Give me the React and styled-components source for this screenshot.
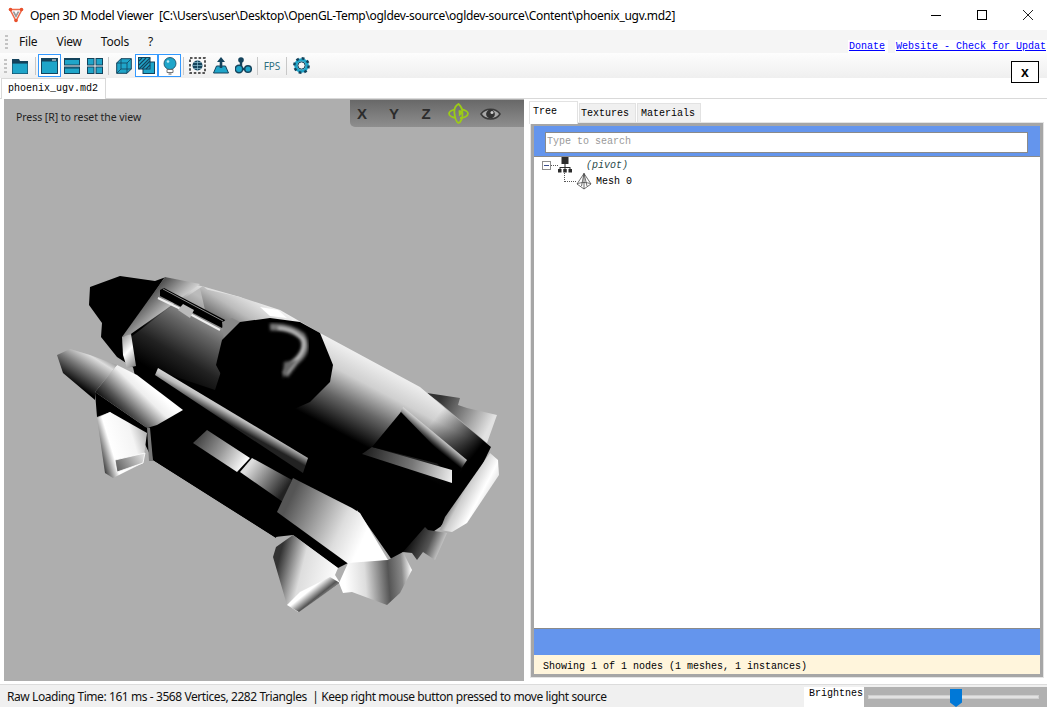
import React from "react";
import styled, { createGlobalStyle } from "styled-components";

const GlobalStyle = createGlobalStyle`
  html, body { margin: 0; padding: 0; background: #fff; overflow: hidden; }
  * { box-sizing: border-box; }
`;

const Window = styled.div`
  position: relative;
  width: 1047px;
  height: 707px;
  display: flex;
  flex-direction: column;
  overflow: hidden;
  background: #fff;
  font-family: "Noto Sans", "Open Sans", sans-serif;
  color: #000;
`;

const TitleBar = styled.div`
  height: 30px;
  display: flex;
  align-items: center;
  padding-left: 8px;
  font-size: 12px;
`;

const TitleText = styled.span`
  margin-left: 6px;
  flex: 1;
  white-space: pre;
  letter-spacing: -0.3px;
`;

const WindowButton = styled.div`
  width: 46px;
  height: 30px;
  display: flex;
  align-items: center;
  justify-content: center;
  margin-right: ${(p) => p.$gap || 0}px;
`;

const MenuBar = styled.div`
  height: 23px;
  display: flex;
  align-items: center;
  background: #f5f5f5;
  padding-left: 5px;
`;

const Grip = styled.div`
  width: 3px;
  height: 14px;
  margin-right: ${(p) => p.$gap}px;
  background: repeating-linear-gradient(to bottom, #c4c4c4 0 2px, transparent 2px 4px);
`;

const MenuItem = styled.span`
  font-size: 12px;
  letter-spacing: -0.2px;
  margin-right: ${(p) => p.$gap}px;
  color: #111;
`;

const Links = styled.div`
  margin-left: auto;
  margin-right: -2px;
  display: flex;
  gap: 7px;
  padding-top: 10px;
`;

const DocLink = styled.a`
  display: block;
  background: #fff;
  padding: 0 3px 0 1px;
  height: 14px;
  font: 10px/14px "Liberation Mono", monospace;
  color: #0000ff;
  text-decoration: underline;
  white-space: nowrap;
`;

const ToolBar = styled.div`
  height: 25px;
  display: flex;
  align-items: center;
  padding-left: 4px;
  background: linear-gradient(to bottom, #fdfdfd, #efefef);
`;

const ToolButton = styled.div`
  width: ${(p) => p.$w || 23}px;
  height: 23px;
  margin-left: ${(p) => p.$shift || 0}px;
  display: flex;
  align-items: center;
  justify-content: center;
  border: 1px solid ${(p) => (p.$active ? "#3399ff" : "transparent")};
  background: ${(p) => (p.$active ? "#fff" : "transparent")};
  font-size: 10px;
  color: #2f6f7f;
`;

const ToolSep = styled.div`
  width: 1px;
  height: 18px;
  margin: 0 ${(p) => p.$r || 2}px 0 ${(p) => p.$l || 2}px;
  background: #c8c8c8;
`;

const CloseBox = styled.div`
  position: absolute;
  left: 1011px;
  top: 61px;
  width: 28px;
  height: 22px;
  border: 1px solid #000;
  background: #fff;
  display: flex;
  align-items: center;
  justify-content: center;
  font: bold 14px "Liberation Sans", sans-serif;
`;

const TabStrip = styled.div`
  height: 21px;
  display: flex;
  align-items: flex-end;
  padding-left: 1px;
  border-bottom: 1px solid #d9d9d9;
`;

const DocTab = styled.div`
  width: 105px;
  height: 21px;
  margin-bottom: -1px;
  padding: 3px 0 0 6px;
  background: #fff;
  border: 1px solid #d9d9d9;
  border-bottom: none;
  font: 10px/14px "Liberation Mono", monospace;
`;

const Main = styled.div`
  flex: 1;
  display: flex;
  padding: 0 4px 3px 4px;
  gap: 5px;
`;

const Viewport = styled.div`
  position: relative;
  width: 520px;
  height: 582px;
  background: #aeaeae;
`;

const ViewHint = styled.div`
  position: relative;
  padding: 11px 0 0 12px;
  font-size: 10.5px;
  letter-spacing: -0.06px;
  color: #222;
`;

const ViewOverlay = styled.div`
  position: absolute;
  right: 0;
  top: 1px;
  width: 174px;
  height: 27px;
  display: flex;
  align-items: center;
  gap: 8px;
  border-bottom-left-radius: 5px;
  background: linear-gradient(to bottom, #686868, #8e8e8e);
`;

const AxisLabel = styled.span`
  width: 24px;
  display: flex;
  justify-content: center;
  font: bold 15px "Liberation Sans", sans-serif;
  color: #2c2c2c;
`;

const ModelCanvas = styled.svg`
  position: absolute;
  left: -4px;
  top: -99px;
  pointer-events: none;
`;

const SidePanel = styled.div`
  flex: 1;
  display: flex;
  flex-direction: column;
  margin: 1px 0 4px;
`;

const SideTabs = styled.div`
  height: 23px;
  display: flex;
  align-items: flex-end;
  gap: 1px;
`;

const SideTab = styled.div`
  width: ${(p) => p.$w}px;
  height: ${(p) => (p.$active ? 23 : 20)}px;
  padding: 3px 0 0 ${(p) => p.$pad}px;
  margin-bottom: ${(p) => (p.$active ? -1 : 0)}px;
  background: ${(p) => (p.$active ? "#fff" : "#f0f0f0")};
  border: 1px solid #e2e2e2;
  border-bottom: none;
  font: 10px/14px "Liberation Mono", monospace;
  position: ${(p) => (p.$active ? "relative" : "static")};
`;

const PanelFrame = styled.div`
  flex: 1;
  display: flex;
  flex-direction: column;
  margin-left: 2px;
  border: 3px solid #a6a6a6;
  outline: 1px solid #e4e4e4;
`;

const SearchBand = styled.div`
  height: 31px;
  padding: 6px 12px 0 11px;
  background: #6495ed;
  border-bottom: 1px solid #8a8a8a;
`;

const SearchBox = styled.div`
  height: 21px;
  padding-left: 1px;
  background: #fff;
  border: 1px solid #8a8a8a;
  font: 10px/18px "Liberation Mono", monospace;
  color: #9a9a9a;
`;

const TreeArea = styled.div`
  flex: 1;
  background: #fff;
  padding: 0 0 0 8px;
  border-bottom: 1px solid #8a8a8a;
`;

const TreeRow = styled.div`
  display: flex;
  align-items: center;
  height: ${(p) => p.$h}px;
  padding-left: ${(p) => p.$indent || 0}px;
  font: ${(p) => (p.$italic ? "italic " : "")}10px "Liberation Mono", monospace;
  color: ${(p) => (p.$italic ? "#2a4a4a" : "#000")};
`;

const TreeLabel = styled.span`
  margin-left: ${(p) => p.$gap}px;
`;

const Expander = styled.div`
  width: 9px;
  height: 9px;
  border: 1px solid #8e8e8e;
  display: flex;
  align-items: center;
  justify-content: center;
  &::after {
    content: "";
    width: 5px;
    height: 1px;
    background: #3c4f8f;
  }
`;

const DotLine = styled.div`
  width: ${(p) => p.$w}px;
  border-top: 1px dotted #555;
`;

const Elbow = styled.div`
  width: 12px;
  height: 9px;
  margin-top: -9px;
  border-left: 1px dotted #555;
  border-bottom: 1px dotted #555;
`;

const BlueBand = styled.div`
  height: 26px;
  background: #6495ed;
`;

const NodeCount = styled.div`
  height: 19px;
  padding-left: 9px;
  background: #fff5dc;
  font: 10px/24px "Liberation Mono", monospace;
  white-space: pre;
`;

const StatusBar = styled.div`
  height: 23px;
  display: flex;
  border-top: 1px solid #dcdcdc;
  background: #f0f0f0;
`;

const StatusText = styled.div`
  width: 804px;
  padding: 3px 0 0 7px;
  font-size: 12px;
  letter-spacing: -0.42px;
  line-height: 17px;
  white-space: pre;
  color: #111;
`;

const BrightLabel = styled.div`
  width: 60px;
  margin-top: 2px;
  padding-left: 5px;
  background: #fff;
  font: 10px/13px "Liberation Mono", monospace;
`;

const SliderBox = styled.div`
  position: relative;
  flex: 1;
  margin-top: 2px;
  background: #b1b1b1;
`;

const SliderTrack = styled.div`
  position: absolute;
  left: 4px;
  right: 8px;
  top: 8px;
  height: 4px;
  background: #e2e2e2;
  border: 1px solid #d0d0d0;
`;

const SliderThumb = styled.div`
  position: absolute;
  left: 86px;
  top: 2px;
  width: 12px;
  height: 18px;
  background: #0078d7;
  clip-path: polygon(0 0, 100% 0, 100% 75%, 50% 100%, 0 75%);
`;

const TEAL = "#1fa5c9";
const NAVY = "#14435c";

const Logo = () => (
  <svg width="16" height="16" viewBox="0 0 16 16">
    <path d="M2 2.500 L14 2.500 L8 14 Z" fill="#fff" stroke="#ee6a4a" strokeWidth="1.600" strokeLinejoin="round" />
    <path d="M4.500 4.500 L8 11 L11.500 4.500 L9.500 4.500 L8 7.500 L6.500 4.500 Z" fill="#999" />
    <circle cx="2.500" cy="2.500" r="1.800" fill="#e8502c" />
    <circle cx="13.500" cy="2.500" r="1.800" fill="#e8502c" />
    <circle cx="8" cy="13.500" r="1.800" fill="#e8502c" />
  </svg>
);

const FolderIcon = () => (
  <svg width="16" height="16" viewBox="0 0 16 16">
    <path d="M0 1h7l1 2h8v3H0z" fill={NAVY} />
    <rect y="5" width="16" height="11" fill={TEAL} stroke={NAVY} strokeWidth="1.200" />
  </svg>
);

const WindowIcon = () => (
  <svg width="17" height="16" viewBox="0 0 17 16">
    <rect x=".5" y=".5" width="16" height="15" fill={TEAL} stroke={NAVY} />
    <rect x=".5" y=".5" width="16" height="3" fill={NAVY} />
    <rect x="11" y="1.500" width="4" height="1" fill="#fff" />
  </svg>
);

const SplitIcon = () => (
  <svg width="16" height="16" viewBox="0 0 16 16">
    <rect x=".5" y=".5" width="15" height="6.500" fill={TEAL} stroke={NAVY} />
    <rect x=".5" y="9" width="15" height="6.500" fill={TEAL} stroke={NAVY} />
    <path d="M.5 1.500h15M.5 10h15" stroke={NAVY} strokeWidth="1.200" />
  </svg>
);

const QuadIcon = () => (
  <svg width="16" height="16" viewBox="0 0 16 16">
    <g fill={TEAL} stroke={NAVY}>
      <rect x=".5" y=".5" width="6.500" height="6.500" />
      <rect x="9" y=".5" width="6.500" height="6.500" />
      <rect x=".5" y="9" width="6.500" height="6.500" />
      <rect x="9" y="9" width="6.500" height="6.500" />
    </g>
  </svg>
);

const CubeIcon = () => (
  <svg width="16" height="16" viewBox="0 0 16 16">
    <path d="M.7 5 L5 .7 H15.300 V11 L11 15.300 H.7 Z" fill={TEAL} stroke={NAVY} />
    <path d="M.7 5 H11 V15.300 M11 5 L15.300 .7 M5 .7 V11 H15.300 M5 11 L.7 15.300" fill="none" stroke={NAVY} strokeWidth=".8" />
  </svg>
);

const ShadeIcon = () => (
  <svg width="17" height="17" viewBox="0 0 17 17">
    <rect x="5" y="5" width="11.500" height="11.500" fill={TEAL} stroke={NAVY} />
    <rect x=".5" y=".5" width="11.500" height="11.500" fill={TEAL} stroke={NAVY} />
    <path d="M1 4 L4 1 M1 8 L8 1 M1 12 L12 1 M4 12 L12 4 M8 12 L12 8" stroke={NAVY} strokeWidth="1.100" />
  </svg>
);

const BulbIcon = () => (
  <svg width="14" height="18" viewBox="0 0 14 18">
    <circle cx="7" cy="6.500" r="6" fill={TEAL} stroke={NAVY} strokeWidth=".8" />
    <path d="M4 12.500h6v3H4z" fill="#fff" stroke="#555" strokeWidth=".8" />
    <path d="M5.500 17h3" stroke="#555" />
    <circle cx="5" cy="4.500" r="1.300" fill="#bfe9f5" />
  </svg>
);

const SelectGlobeIcon = () => (
  <svg width="17" height="17" viewBox="0 0 17 17">
    <rect x="1" y="1" width="15" height="15" fill="none" stroke="#222" strokeWidth="1.500" strokeDasharray="2.500 1.800" />
    <circle cx="8.500" cy="8.500" r="5" fill={NAVY} />
    <path d="M3.500 8.500h10M8.500 3.500v10M5 5.500h7M5 11.500h7" stroke="#9fd4e4" strokeWidth=".6" />
  </svg>
);

const ExportIcon = () => (
  <svg width="16" height="17" viewBox="0 0 16 17">
    <path d="M3.500 9 H12.500 L15.500 16 H.5 Z" fill={TEAL} stroke={NAVY} />
    <path d="M8 0 L12 5 H9.300 V11 H6.700 V5 H4 Z" fill={NAVY} />
  </svg>
);

const NodesIcon = () => (
  <svg width="17" height="17" viewBox="0 0 17 17">
    <path d="M6 4 V12 H13" stroke={NAVY} strokeWidth="2.400" fill="none" />
    <circle cx="6" cy="3" r="2.800" fill={NAVY} />
    <circle cx="4" cy="12" r="3.700" fill={TEAL} stroke={NAVY} strokeWidth="1.500" />
    <circle cx="13" cy="12" r="3.300" fill={TEAL} stroke={NAVY} strokeWidth="1.500" />
  </svg>
);

const GearIcon = () => (
  <svg width="17" height="17" viewBox="0 0 17 17">
    <circle cx="8.500" cy="8.500" r="5.600" fill="none" stroke={TEAL} strokeWidth="3.400" />
    <circle cx="8.500" cy="8.500" r="7.200" fill="none" stroke={NAVY} strokeWidth="2.400" strokeDasharray="2.800 2.850" />
    <circle cx="8.500" cy="8.500" r="3.600" fill="none" stroke={NAVY} strokeWidth="1" />
  </svg>
);

const OrbitIcon = () => (
  <svg width="21" height="21" viewBox="0 0 21 21" fill="none" stroke="#9ccc16" strokeWidth="1.800">
    <path d="M10.500 1 C7 3 6 7 6.500 10.500 C7 15 8 19 10.500 20 C13 19 14.500 15 14.500 10.500 C14.500 7 13 3 10.500 1 Z" />
    <path d="M6.500 6.500 C3 7.500 1 9 1 10.500 C1 12.500 4 14.500 8 15 M14 6.500 C17.500 7 20 9 20 10.500 C20 13 16 15 12 15" />
    <path d="M10.500 7.500 C13 6.500 15 8 14.500 10.500 L11 13.500 Z" fill="#9ccc16" stroke="none" />
  </svg>
);

const EyeIcon = () => (
  <svg width="21" height="16" viewBox="0 0 21 16">
    <path d="M1 8 C5 1.500 16 1.500 20 8 C16 14.500 5 14.500 1 8 Z" fill="#a8a8a8" stroke="#3a3a3a" strokeWidth="1.500" />
    <circle cx="10.500" cy="8" r="4.400" fill="#333" />
    <circle cx="12" cy="6.500" r="1.500" fill="#ccc" />
  </svg>
);

const OrgIcon = () => (
  <svg width="14" height="16" viewBox="0 0 14 16" fill="#2c2c2c">
    <rect x="3.500" y="0" width="7" height="7" />
    <path d="M6.500 7h1v3h5v2h-1v-1H7.500v1h-1v-1H2.500v1h-1v-2h5z" />
    <rect x="0" y="12" width="3.500" height="3.500" />
    <rect x="5.250" y="12" width="3.500" height="3.500" />
    <rect x="10.500" y="12" width="3.500" height="3.500" />
  </svg>
);

const MeshIcon = () => (
  <svg width="16" height="17" viewBox="0 0 16 17" fill="none" stroke="#4a4a4a" strokeWidth=".8">
    <path d="M8 .5 L15 11 L8 16 L1 11 Z" />
    <path d="M8 .5 L5.500 13 M8 .5 L11 13 M1 11 C5 9 11 9 15 11 M8 .5 V16" />
  </svg>
);

// the loaded model, drawn as flat faces with gradient shading
const Grad = ({ id, x1, y1, x2, y2, stops }) => (
  <linearGradient id={id} gradientUnits="userSpaceOnUse" x1={x1} y1={y1} x2={x2} y2={y2}>
    {stops.map(([o, c]) => (
      <stop key={o} offset={o} stopColor={c} />
    ))}
  </linearGradient>
);

const Model = () => (
  <ModelCanvas width="528" height="690" viewBox="0 0 528 690">
    <defs>
      <Grad id="hull" x1="330" y1="338" x2="293" y2="408" stops={[[0, "#f0f0f0"], [0.3, "#cfcfcf"], [0.62, "#666"], [1, "#000"]]} />
      <Grad id="hullEnd" x1="440" y1="412" x2="482" y2="445" stops={[[0, "rgba(0,0,0,0)"], [1, "#000"]]} />
      <Grad id="rear" x1="205" y1="300" x2="160" y2="375" stops={[[0, "#bbb"], [0.35, "#666"], [0.7, "#222"], [1, "#000"]]} />
      <Grad id="topDeck" x1="260" y1="290" x2="225" y2="345" stops={[[0, "#fff"], [0.45, "#bbb"], [1, "#222"]]} />
      <Grad id="ridge" x1="150" y1="305" x2="172" y2="325" stops={[[0, "#999"], [0.5, "#fff"], [1, "#888"]]} />
      <Grad id="ridgeTop" x1="160" y1="280" x2="190" y2="310" stops={[[0, "#444"], [0.6, "#bbb"], [1, "#fff"]]} />
      <Grad id="strip" x1="238" y1="405" x2="228" y2="423" stops={[[0, "#fff"], [0.55, "#bbb"], [1, "#222"]]} />
      <Grad id="nose" x1="75" y1="385" x2="97" y2="350" stops={[[0, "#000"], [0.45, "#777"], [0.8, "#ddd"], [1, "#888"]]} />
      <Grad id="boost" x1="118" y1="418" x2="150" y2="385" stops={[[0, "#000"], [0.3, "#555"], [0.75, "#eee"], [1, "#fff"]]} />
      <Grad id="nozzle" x1="96" y1="450" x2="145" y2="435" stops={[[0, "#222"], [0.3, "#fff"], [0.75, "#f4f4f4"], [1, "#bbb"]]} />
      <Grad id="nozzleIn" x1="118" y1="470" x2="143" y2="455" stops={[[0, "#666"], [1, "#dedede"]]} />
      <Grad id="panelA" x1="198" y1="438" x2="245" y2="465" stops={[[0, "#444"], [0.5, "#999"], [1, "#fff"]]} />
      <Grad id="panelB" x1="250" y1="465" x2="285" y2="490" stops={[[0, "#ddd"], [1, "#222"]]} />
      <Grad id="bodyA" x1="290" y1="500" x2="365" y2="535" stops={[[0, "#555"], [0.35, "#999"], [0.7, "#ddd"], [1, "#fff"]]} />
      <Grad id="cap" x1="345" y1="580" x2="412" y2="575" stops={[[0, "#fff"], [0.3, "#ddd"], [0.65, "#555"], [0.85, "#888"], [1, "#fff"]]} />
      <Grad id="lower" x1="280" y1="555" x2="340" y2="570" stops={[[0, "#333"], [0.4, "#ddd"], [1, "#fff"]]} />
      <Grad id="lowerTip" x1="310" y1="590" x2="322" y2="605" stops={[[0, "#fff"], [0.5, "#555"], [1, "#ccc"]]} />
      <Grad id="endBand" x1="452" y1="480" x2="490" y2="500" stops={[[0, "#111"], [0.4, "#ccc"], [0.75, "#fff"], [1, "#ddd"]]} />
      <Grad id="fin" x1="440" y1="400" x2="490" y2="425" stops={[[0, "#333"], [0.6, "#999"], [1, "#e2e2e2"]]} />
      <Grad id="hatchR" x1="436" y1="432" x2="428" y2="442" stops={[[0, "#eee"], [1, "#000"]]} />
      <Grad id="hatchB" x1="365" y1="455" x2="458" y2="480" stops={[[0, "#222"], [0.5, "#777"], [1, "#fff"]]} />
      <Grad id="bits" x1="410" y1="540" x2="445" y2="555" stops={[[0, "#111"], [0.5, "#555"], [1, "#fff"]]} />
      <filter id="soft"><feGaussianBlur stdDeviation="1.600" /></filter>
    </defs>

    <polygon fill="#000" points="90,287 120,276 155,281 166,277 125,338 137,370 117,357 101,337 102,323 89,305" />
    <polygon fill="url(#fin)" points="427,393 460,398 458,405 467,408 497,415 487,443 440,403" />
    <polygon fill="url(#hull)" points="123,338 165,277 205,287 240,297 320,333 420,387 491,447 470,490 440,527 392,560 357,510 275,537 153,460 133,367" />
    <polygon fill="url(#hullEnd)" points="420,387 491,447 470,490 440,527 400,480" />
    <polygon fill="url(#rear)" points="127,340 166,310 203,286 250,330 228,350 215,390 170,375 135,365" />
    <polygon fill="url(#topDeck)" points="200,288 240,297 280,310 320,333 300,340 240,345 205,310" />
    <polygon fill="url(#ridgeTop)" points="165,277 200,284 165,310 128,336 122,337" />
    <polygon fill="url(#ridge)" points="122,337 131,334 136,366 127,368 123,355" />
    <polygon fill="#fff" points="260,307 278,310 287,318 270,316" />

    <polygon fill="#000" points="153,460 147,428 200,430 292,485 280,510 276,538" />
    <polygon fill="#000" points="275,537 293,535 338,568 348,563 357,510 277,512" />
    <polygon fill="#000" points="95,392 147,428 153,461 143,440 110,412 97,417" />
    <polygon fill="url(#panelA)" points="193,443 207,430 250,458 237,472" />
    <polygon fill="url(#panelB)" points="240,472 252,458 292,480 283,502" />
    <polygon fill="url(#strip)" points="158,368 308,458 303,473 155,375" />

    <polygon fill="url(#lower)" points="293,535 338,568 335,575 340,583 298,612 287,605 273,557 276,547" />
    <polygon fill="url(#lowerTip)" points="299,612 287,605 300,592 330,577 340,583" />
    <polygon fill="url(#bodyA)" points="293,478 352,508 360,513 388,560 350,565 277,512" />
    <polygon fill="url(#cap)" points="348,563 388,560 403,552 412,570 400,593 387,605 352,592 343,593 339,583" />
    <polygon fill="url(#bits)" points="403,552 425,527 428,530 447,533 435,560 423,552 417,560 412,553" />
    <polygon fill="url(#endBand)" points="490,453 498,460 499,475 467,523 452,532 440,530 445,517" />

    <polygon fill="url(#nozzle)" points="97,418 110,412 147,433 143,463 113,478 105,473" />
    <polygon fill="url(#nozzleIn)" stroke="#fff" strokeWidth=".8" points="115,460 145,453 143,463 117,472" />
    <polygon fill="#777" points="147,427 150,428 153,461 149,461" />
    <polygon fill="url(#boost)" points="117,365 137,375 183,410 157,425 147,428 95,392" />
    <polygon fill="url(#nose)" points="57,355 70,349 90,355 117,365 95,392 95,400 63,373" />

    <polygon fill="#000" points="160,290 164,288 225,320 222,328 160,296" />
    <path d="M158 298 L189 313 M190 314 L220 330" stroke="#eee" strokeWidth="2" />
    <path d="M163 289 L223 321" stroke="#888" strokeWidth="1" />
    <polygon fill="#bbb" points="183,304 194,310 190,318 178,310" />
    <polygon fill="url(#ridge)" points="222,322 232,318 248,326 232,345 224,340" />

    <polygon fill="#000" points="216,365 222,340 240,322 270,318 300,322 320,333 333,365 330,382 310,402 283,414 260,412 232,395" />
    <path d="M270 327 Q290 326 302 336 Q310 350 295 362 L285 375" fill="none" stroke="#777" strokeWidth="7" filter="url(#soft)" />
    <path d="M278 328 Q292 328 303 339 Q307 350 295 361 L287 372" fill="none" stroke="#ddd" strokeWidth="2" filter="url(#soft)" />
    <polygon fill="#666" filter="url(#soft)" points="283,378 298,360 284,362" />

    <polygon fill="url(#hatchR)" points="403,407 467,460 452,483 400,413" />
    <polygon fill="url(#hatchB)" points="372,447 452,470 452,483 362,454" />
    <polygon fill="#000" points="401,412 455,468 372,447" />
  </ModelCanvas>
);

export default function App() {
  return (
    <Window>
      <GlobalStyle />
      <TitleBar>
        <Logo />
        <TitleText>{"Open 3D Model Viewer  [C:\\Users\\user\\Desktop\\OpenGL-Temp\\ogldev-source\\ogldev-source\\Content\\phoenix_ugv.md2]"}</TitleText>
        <WindowButton>
          <svg width="10" height="10"><path d="M0 5.500h10" stroke="#000" /></svg>
        </WindowButton>
        <WindowButton>
          <svg width="10" height="10"><rect x=".5" y=".5" width="9" height="9" fill="none" stroke="#000" /></svg>
        </WindowButton>
        <WindowButton $gap={-4}>
          <svg width="10" height="10"><path d="M0 0L10 10M10 0L0 10" stroke="#222" /></svg>
        </WindowButton>
      </TitleBar>

      <MenuBar>
        <Grip $gap={11} />
        <MenuItem $gap={19}>File</MenuItem>
        <MenuItem $gap={19}>View</MenuItem>
        <MenuItem $gap={19}>Tools</MenuItem>
        <MenuItem $gap={0}>?</MenuItem>
        <Links>
          <DocLink>Donate</DocLink>
          <DocLink>Website - Check for Updat</DocLink>
        </Links>
      </MenuBar>

      <ToolBar>
        <Grip $gap={1} />
        <ToolButton><FolderIcon /></ToolButton>
        <ToolSep $l={4} />
        <ToolButton $active><WindowIcon /></ToolButton>
        <ToolButton $shift={-1}><SplitIcon /></ToolButton>
        <ToolButton><QuadIcon /></ToolButton>
        <ToolSep $r={3} />
        <ToolButton><CubeIcon /></ToolButton>
        <ToolButton $active><ShadeIcon /></ToolButton>
        <ToolButton $active><BulbIcon /></ToolButton>
        <ToolSep />
        <ToolButton><SelectGlobeIcon /></ToolButton>
        <ToolButton><ExportIcon /></ToolButton>
        <ToolButton><NodesIcon /></ToolButton>
        <ToolSep />
        <ToolButton $w={24}>FPS</ToolButton>
        <ToolSep />
        <ToolButton $shift={1}><GearIcon /></ToolButton>
      </ToolBar>

      <TabStrip>
        <DocTab>phoenix_ugv.md2</DocTab>
      </TabStrip>
      <CloseBox>x</CloseBox>

      <Main>
        <Viewport>
          <Model />
          <ViewHint>Press [R] to reset the view</ViewHint>
          <ViewOverlay>
            <AxisLabel>X</AxisLabel>
            <AxisLabel>Y</AxisLabel>
            <AxisLabel>Z</AxisLabel>
            <AxisLabel><OrbitIcon /></AxisLabel>
            <AxisLabel><EyeIcon /></AxisLabel>
          </ViewOverlay>
        </Viewport>

        <SidePanel>
          <SideTabs>
            <SideTab $active $w={49} $pad={3}>Tree</SideTab>
            <SideTab $w={57} $pad={1}>Textures</SideTab>
            <SideTab $w={64} $pad={3}>Materials</SideTab>
          </SideTabs>
          <PanelFrame>
            <SearchBand>
              <SearchBox>Type to search</SearchBox>
            </SearchBand>
            <TreeArea>
              <TreeRow $h={16} $italic>
                <Expander />
                <DotLine $w={7} />
                <OrgIcon />
                <TreeLabel $gap={14}>(pivot)</TreeLabel>
              </TreeRow>
              <TreeRow $h={17} $indent={22}>
                <Elbow />
                <MeshIcon />
                <TreeLabel $gap={4}>Mesh 0</TreeLabel>
              </TreeRow>
            </TreeArea>
            <BlueBand />
            <NodeCount>Showing 1 of 1 nodes (1 meshes, 1 instances)</NodeCount>
          </PanelFrame>
        </SidePanel>
      </Main>

      <StatusBar>
        <StatusText>Raw Loading Time: 161 ms - 3568 Vertices, 2282 Triangles  | Keep right mouse button pressed to move light source</StatusText>
        <BrightLabel>Brightnes</BrightLabel>
        <SliderBox>
          <SliderTrack />
          <SliderThumb />
        </SliderBox>
      </StatusBar>
    </Window>
  );
}
